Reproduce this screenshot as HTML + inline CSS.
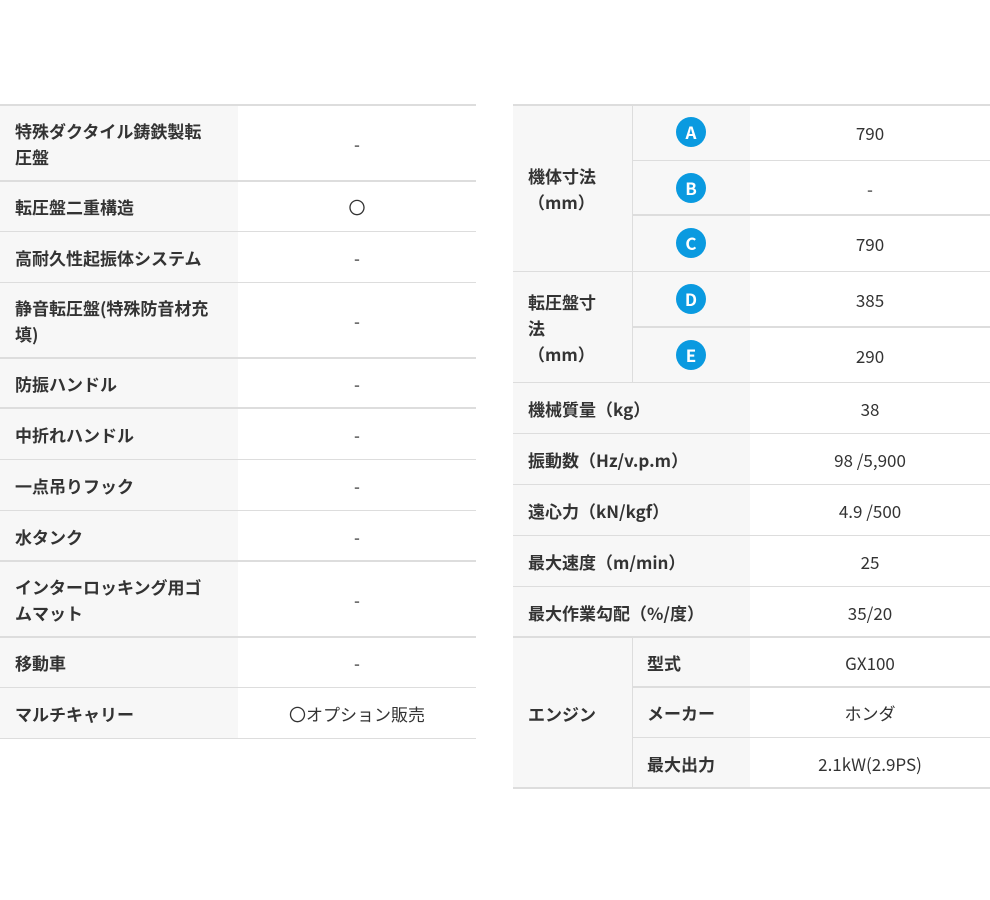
<!DOCTYPE html>
<html><head><meta charset="utf-8"><style>
body{margin:0;width:990px;height:900px;background:#fff;position:relative;font-family:"Noto Sans CJK JP","Liberation Sans",sans-serif;color:#333;font-size:17px;overflow:hidden}
.c{position:absolute;display:flex;align-items:center;box-sizing:border-box;line-height:26px;padding-top:2px}
.l{background:#f7f7f7;padding-left:15px;font-weight:bold;color:#333}
.v{justify-content:center;background:#fff}
.g{background:#f7f7f7;padding-top:0}
.h{position:absolute;background:#ddd}
.ci{width:30px;height:30px;border-radius:50%;background:#0a9ae0;color:#fff;font-weight:bold;font-size:17px;display:flex;align-items:center;justify-content:center;margin:0 auto;line-height:30px}
</style></head><body>
<!-- left table -->
<div class="c l" style="left:0;top:104px;width:238px;height:77px">特殊ダクタイル鋳鉄製転<br>圧盤</div><div class="c v" style="left:238px;top:104px;width:238px;height:77px">-</div>
<div class="c l" style="left:0;top:181px;width:238px;height:50px">転圧盤二重構造</div><div class="c v" style="left:238px;top:181px;width:238px;height:50px">〇</div>
<div class="c l" style="left:0;top:231px;width:238px;height:51px">高耐久性起振体システム</div><div class="c v" style="left:238px;top:231px;width:238px;height:51px">-</div>
<div class="c l" style="left:0;top:282px;width:238px;height:76px">静音転圧盤(特殊防音材充<br>填)</div><div class="c v" style="left:238px;top:282px;width:238px;height:76px">-</div>
<div class="c l" style="left:0;top:358px;width:238px;height:50px">防振ハンドル</div><div class="c v" style="left:238px;top:358px;width:238px;height:50px">-</div>
<div class="c l" style="left:0;top:408px;width:238px;height:51px">中折れハンドル</div><div class="c v" style="left:238px;top:408px;width:238px;height:51px">-</div>
<div class="c l" style="left:0;top:459px;width:238px;height:51px">一点吊りフック</div><div class="c v" style="left:238px;top:459px;width:238px;height:51px">-</div>
<div class="c l" style="left:0;top:510px;width:238px;height:51px">水タンク</div><div class="c v" style="left:238px;top:510px;width:238px;height:51px">-</div>
<div class="c l" style="left:0;top:561px;width:238px;height:76px">インターロッキング用ゴ<br>ムマット</div><div class="c v" style="left:238px;top:561px;width:238px;height:76px">-</div>
<div class="c l" style="left:0;top:637px;width:238px;height:50px">移動車</div><div class="c v" style="left:238px;top:637px;width:238px;height:50px">-</div>
<div class="c l" style="left:0;top:687px;width:238px;height:51px">マルチキャリー</div><div class="c v" style="left:238px;top:687px;width:238px;height:51px">〇オプション販売</div>
<div class="h" style="left:0;width:476px;top:104px;height:2px"></div>
<div class="h" style="left:0;width:476px;top:180px;height:2px"></div>
<div class="h" style="left:0;width:476px;top:231px;height:1px"></div>
<div class="h" style="left:0;width:476px;top:282px;height:1px"></div>
<div class="h" style="left:0;width:476px;top:357px;height:2px"></div>
<div class="h" style="left:0;width:476px;top:407px;height:2px"></div>
<div class="h" style="left:0;width:476px;top:459px;height:1px"></div>
<div class="h" style="left:0;width:476px;top:510px;height:1px"></div>
<div class="h" style="left:0;width:476px;top:560px;height:2px"></div>
<div class="h" style="left:0;width:476px;top:636px;height:2px"></div>
<div class="h" style="left:0;width:476px;top:687px;height:1px"></div>
<div class="h" style="left:0;width:476px;top:738px;height:1px"></div>
<!-- right table -->
<div class="c l" style="left:513px;top:104px;width:119px;height:167px">機体寸法<br>（mm）</div>
<div class="c l" style="left:513px;top:271px;width:119px;height:111px">転圧盤寸<br>法<br>（mm）</div>
<div class="c g" style="left:632px;top:104px;width:118px;height:56px"><div class="ci">A</div></div><div class="c v" style="left:750px;top:104px;width:240px;height:56px">790</div>
<div class="c g" style="left:632px;top:160px;width:118px;height:55px"><div class="ci">B</div></div><div class="c v" style="left:750px;top:160px;width:240px;height:55px">-</div>
<div class="c g" style="left:632px;top:215px;width:118px;height:56px"><div class="ci">C</div></div><div class="c v" style="left:750px;top:215px;width:240px;height:56px">790</div>
<div class="c g" style="left:632px;top:271px;width:118px;height:56px"><div class="ci">D</div></div><div class="c v" style="left:750px;top:271px;width:240px;height:56px">385</div>
<div class="c g" style="left:632px;top:327px;width:118px;height:55px"><div class="ci">E</div></div><div class="c v" style="left:750px;top:327px;width:240px;height:55px">290</div>
<div class="c l" style="left:513px;top:382px;width:237px;height:51px">機械質量（kg）</div><div class="c v" style="left:750px;top:382px;width:240px;height:51px">38</div>
<div class="c l" style="left:513px;top:433px;width:237px;height:51px">振動数（Hz/v.p.m）</div><div class="c v" style="left:750px;top:433px;width:240px;height:51px">98 /5,900</div>
<div class="c l" style="left:513px;top:484px;width:237px;height:51px">遠心力（kN/kgf）</div><div class="c v" style="left:750px;top:484px;width:240px;height:51px">4.9 /500</div>
<div class="c l" style="left:513px;top:535px;width:237px;height:51px">最大速度（m/min）</div><div class="c v" style="left:750px;top:535px;width:240px;height:51px">25</div>
<div class="c l" style="left:513px;top:586px;width:237px;height:51px">最大作業勾配（%/度）</div><div class="c v" style="left:750px;top:586px;width:240px;height:51px">35/20</div>
<div class="c l" style="left:513px;top:637px;width:119px;height:151px">エンジン</div>
<div class="c l" style="left:632px;top:637px;width:118px;height:50px">型式</div><div class="c v" style="left:750px;top:637px;width:240px;height:50px">GX100</div>
<div class="c l" style="left:632px;top:687px;width:118px;height:50px">メーカー</div><div class="c v" style="left:750px;top:687px;width:240px;height:50px">ホンダ</div>
<div class="c l" style="left:632px;top:737px;width:118px;height:51px">最大出力</div><div class="c v" style="left:750px;top:737px;width:240px;height:51px">2.1kW(2.9PS)</div>
<div class="h" style="left:513px;width:477px;top:104px;height:2px"></div>
<div class="h" style="left:632px;width:358px;top:160px;height:1px"></div>
<div class="h" style="left:632px;width:358px;top:214px;height:2px"></div>
<div class="h" style="left:513px;width:477px;top:271px;height:1px"></div>
<div class="h" style="left:632px;width:358px;top:326px;height:2px"></div>
<div class="h" style="left:513px;width:477px;top:382px;height:1px"></div>
<div class="h" style="left:513px;width:477px;top:433px;height:1px"></div>
<div class="h" style="left:513px;width:477px;top:484px;height:1px"></div>
<div class="h" style="left:513px;width:477px;top:535px;height:1px"></div>
<div class="h" style="left:513px;width:477px;top:586px;height:1px"></div>
<div class="h" style="left:513px;width:477px;top:636px;height:2px"></div>
<div class="h" style="left:632px;width:358px;top:686px;height:2px"></div>
<div class="h" style="left:632px;width:358px;top:737px;height:1px"></div>
<div class="h" style="left:513px;width:477px;top:787px;height:2px"></div>
<div class="h" style="left:632px;width:1px;top:104px;height:278px"></div>
<div class="h" style="left:632px;width:1px;top:637px;height:151px"></div>
</body></html>
